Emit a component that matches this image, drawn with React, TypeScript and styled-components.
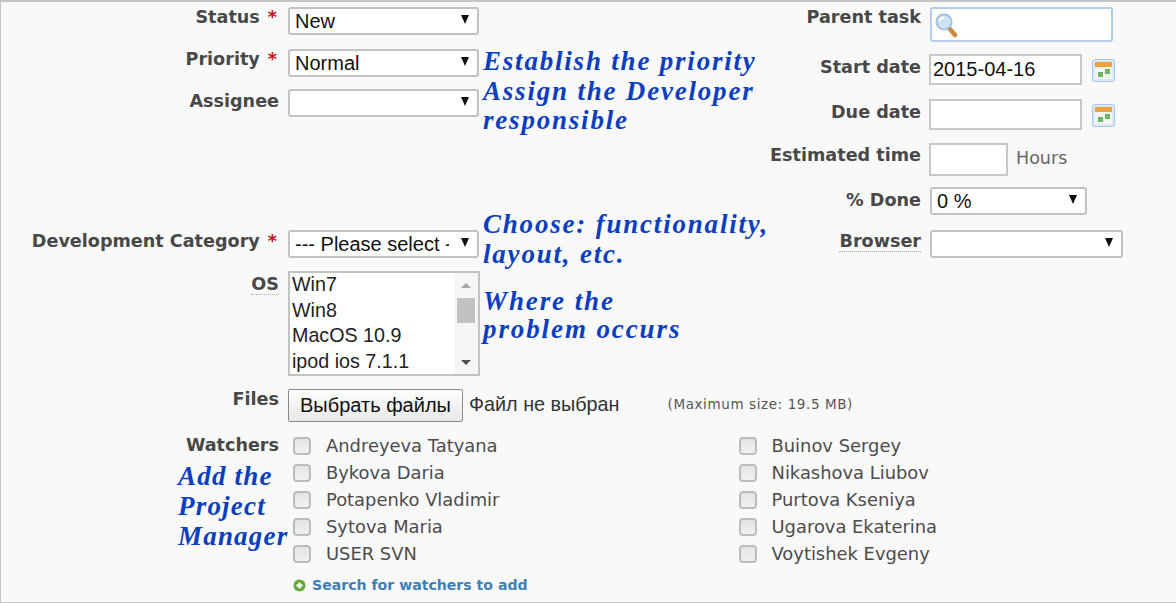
import styled, { createGlobalStyle } from "styled-components";

const GlobalStyle = createGlobalStyle`
  html, body {
    margin: 0;
    padding: 0;
    background: #f9f9f9;
  }
`;

const Page = styled.div`
  width: 1176px;
  height: 603px;
  box-sizing: border-box;
  overflow: hidden;
  border-top: 2px solid #c4c4c4;
  border-left: 1px solid #c4c4c4;
  border-bottom: 1px solid #c4c4c4;
  background: #f9f9f9;
  padding-top: 5px;
  font-family: "DejaVu Sans", sans-serif;
  color: #444;
`;

const Columns = styled.div`
  display: flex;
  height: 256px;
`;

const LeftColumn = styled.div`
  width: 600px;
  display: flex;
  flex-direction: column;
`;

const RightColumn = styled.div`
  flex: 1;
  display: flex;
  flex-direction: column;
`;

const Row = styled.div<{ $top?: number; $height: number }>`
  position: relative;
  display: flex;
  gap: 9px;
  height: ${(p) => p.$height}px;
  margin-top: ${(p) => p.$top ?? 0}px;
`;

const RightRow = styled(Row)`
  gap: 8px;
`;

const Label = styled.label<{ $width?: number; $dotted?: boolean; $up?: number }>`
  flex: none;
  width: ${(p) => p.$width ?? 278}px;
  box-sizing: border-box;
  padding-top: ${(p) => p.$up ?? 0}px;
  text-align: right;
  font-size: 17.6px;
  font-weight: bold;
  line-height: 20px;
  color: #484848;
  span.dots {
    border-bottom: ${(p) => (p.$dotted ? "1px dotted #aaa" : "none")};
  }
`;

const Required = styled.span`
  color: #c8101a;
  margin: 0 2px 0 8px;
`;

const SelectWrap = styled.div<{ $width: number; $left?: number }>`
  position: relative;
  width: ${(p) => p.$width}px;
  height: 28px;
  margin-left: ${(p) => p.$left ?? 0}px;
  &::after {
    content: "";
    position: absolute;
    right: 10px;
    top: 8px;
    border-left: 4.5px solid transparent;
    border-right: 4.5px solid transparent;
    border-top: 9px solid #111;
  }
`;

const Select = styled.select`
  appearance: none;
  width: 100%;
  height: 100%;
  box-sizing: border-box;
  border: 2px solid #c2c2c2;
  border-radius: 3px;
  background: #fff;
  padding: 0 28px 1px 5px;
  font-family: "Liberation Sans", sans-serif;
  font-size: 20px;
  color: #111;
  outline: none;
`;

const TextInput = styled.input<{ $width: number; $height: number }>`
  width: ${(p) => p.$width}px;
  height: ${(p) => p.$height}px;
  box-sizing: border-box;
  border: 2px solid #c8c8c8;
  background: #fff;
  padding: 0 2px;
  font-family: "Liberation Sans", sans-serif;
  font-size: 20px;
  color: #111;
  outline: none;
`;

const SearchBox = styled.div`
  display: flex;
  align-items: center;
  width: 183px;
  height: 35px;
  margin-left: 1px;
  box-sizing: border-box;
  border: 2px solid #b5cde6;
  border-radius: 3px;
  background: #fff;
  padding-left: 3px;
`;

const CalendarButton = styled.span`
  display: block;
  margin: 5px 0 0 2px;
  width: 23px;
  height: 23px;
`;

const Hours = styled.span`
  margin-top: 5px;
  font-size: 17.5px;
  line-height: 20px;
  color: #666;
`;

const Note = styled.div<{ $x: number; $y: number; $spacing?: number; $leading?: number }>`
  position: absolute;
  left: ${(p) => p.$x}px;
  top: ${(p) => p.$y}px;
  font-family: "Liberation Serif", serif;
  font-style: italic;
  font-weight: bold;
  font-size: 27px;
  line-height: ${(p) => p.$leading ?? 30}px;
  letter-spacing: ${(p) => p.$spacing ?? 1.8}px;
  white-space: nowrap;
  color: #0b3fbf;
`;

const ListBox = styled.div`
  display: flex;
  width: 192px;
  height: 105px;
  box-sizing: border-box;
  border: 2px solid #c2c2c2;
  background: #fff;
`;

const ListItems = styled.ul`
  flex: 1;
  list-style: none;
  margin: -1px 0 0;
  padding: 0 0 0 2px;
  font-family: "Liberation Sans", sans-serif;
  font-size: 19.7px;
  line-height: 25.5px;
  color: #222;
`;

const ScrollTrack = styled.div`
  position: relative;
  width: 24px;
  margin-left: auto;
  background: #f6f6f6;
`;

const ScrollUp = styled.div`
  position: absolute;
  top: 10px;
  left: 7px;
  border-left: 5px solid transparent;
  border-right: 5px solid transparent;
  border-bottom: 5px solid #a6a6a6;
`;

const ScrollDown = styled.div`
  position: absolute;
  bottom: 9px;
  left: 7px;
  border-left: 5px solid transparent;
  border-right: 5px solid transparent;
  border-top: 5px solid #505050;
`;

const ScrollThumb = styled.div`
  position: absolute;
  top: 25px;
  left: 3px;
  width: 18px;
  height: 25px;
  background: #c2c2c2;
`;

const FileButton = styled.button`
  width: 175px;
  height: 33px;
  box-sizing: border-box;
  border: 1px solid #8a8a8a;
  border-radius: 2px;
  background: linear-gradient(#fdfdfd, #e8e8e8);
  font-family: "Liberation Sans", sans-serif;
  font-size: 20px;
  color: #111;
  padding: 0;
`;

const FileStatus = styled.span`
  margin: 4px 0 0 -3px;
  font-family: "Liberation Sans", sans-serif;
  font-size: 19.8px;
  color: #333;
`;

const MaxSize = styled.span`
  margin: 6px 0 0 39px;
  font-size: 13.5px;
  letter-spacing: 0.6px;
  line-height: 18px;
  color: #555;
`;

const Watchers = styled.div`
  display: grid;
  grid-template-columns: 445.5px 1fr;
  grid-auto-rows: 27px;
  margin-left: 5px;
`;

const WatcherLabel = styled.label`
  display: flex;
  align-items: center;
  gap: 15px;
  font-size: 17.9px;
  color: #4c4c4c;
`;

const CheckBox = styled.input`
  appearance: none;
  margin: 0;
  flex: none;
  width: 18px;
  height: 18px;
  box-sizing: border-box;
  border: 2px solid #bcbcbc;
  border-radius: 4px;
  background: linear-gradient(#e4e4e4, #f0f0f0);
`;

const SearchLink = styled.a`
  display: flex;
  align-items: center;
  gap: 6px;
  margin: 8px 0 0 5px;
  font-size: 14.1px;
  font-weight: bold;
  line-height: 20px;
  color: #3e7fb5;
  text-decoration: none;
`;

const WatchersArea = styled.div`
  flex: 1;
`;

const MagnifierIcon = () => (
  <svg width="24" height="26" viewBox="0 0 24 26">
    <path d="M14 16l6 7" stroke="#c98a3c" strokeWidth="4.5" strokeLinecap="round" />
    <circle cx="9" cy="10" r="7.5" fill="#cfe3f5" stroke="#a3c4e0" strokeWidth="2" />
    <path d="M4.5 9a4.5 4.5 0 0 1 4.5-3.5" stroke="#fff" strokeWidth="2" fill="none" />
  </svg>
);

const CalendarIcon = () => (
  <svg width="23" height="23" viewBox="0 0 23 23">
    <rect x="0.5" y="0.5" width="22" height="22" rx="2" fill="#dbe9f7" stroke="#a9c8e8" />
    <rect x="3" y="3" width="17" height="17" fill="#f4f5ee" />
    <rect x="3" y="3" width="17" height="5" fill="#f0a13e" />
    <rect x="6" y="13" width="5" height="5" fill="#6bb564" />
    <rect x="13" y="10" width="5" height="5" fill="#6bb564" />
  </svg>
);

const PlusIcon = () => (
  <svg width="13" height="13" viewBox="0 0 13 13">
    <circle cx="6.5" cy="6.5" r="6" fill="#62a83a" />
    <path d="M6.5 3.5v6M3.5 6.5h6" stroke="#f4f8ee" strokeWidth="2.4" />
  </svg>
);

const watcherNames = ["Andreyeva Tatyana", "Buinov Sergey", "Bykova Daria", "Nikashova Liubov", "Potapenko Vladimir", "Purtova Kseniya", "Sytova Maria", "Ugarova Ekaterina", "USER SVN", "Voytishek Evgeny"];

const osList = ["Win7", "Win8", "MacOS 10.9", "ipod ios 7.1.1"];

const App = () => {
  return (
    <>
      <GlobalStyle />
      <Page>
        <Columns>
          <LeftColumn>
            <Row $height={28}>
              <Label>Status<Required>*</Required></Label>
              <SelectWrap $width={191}>
                <Select defaultValue="New"><option>New</option></Select>
              </SelectWrap>
            </Row>
            <Row $top={14} $height={28}>
              <Label>Priority<Required>*</Required></Label>
              <SelectWrap $width={191}>
                <Select defaultValue="Normal"><option>Normal</option></Select>
              </SelectWrap>
              <Note $x={482} $y={-2} $leading={29.5}>Establish the priority<br />Assign the Developer<br />responsible</Note>
            </Row>
            <Row $top={12} $height={28}>
              <Label $up={2}>Assignee</Label>
              <SelectWrap $width={191}>
                <Select><option></option></Select>
              </SelectWrap>
            </Row>
            <Row $top={113} $height={28}>
              <Label $up={1}>Development Category<Required>*</Required></Label>
              <SelectWrap $width={191}>
                <Select defaultValue="--- Please select ---"><option>--- Please select ---</option></Select>
              </SelectWrap>
              <Note $x={482} $y={-21}>Choose: functionality,<br />layout, etc.</Note>
            </Row>
          </LeftColumn>
          <RightColumn>
            <RightRow $height={35}>
              <Label $width={320}>Parent task</Label>
              <SearchBox><MagnifierIcon /></SearchBox>
            </RightRow>
            <RightRow $top={12} $height={30}>
              <Label $width={320} $up={3}>Start date</Label>
              <TextInput $width={153} $height={31} defaultValue="2015-04-16" />
              <CalendarButton><CalendarIcon /></CalendarButton>
            </RightRow>
            <RightRow $top={15} $height={30}>
              <Label $width={320} $up={3}>Due date</Label>
              <TextInput $width={153} $height={31} />
              <CalendarButton><CalendarIcon /></CalendarButton>
            </RightRow>
            <RightRow $top={14} $height={32}>
              <Label $width={320} $up={2}>Estimated time</Label>
              <TextInput $width={79} $height={33} />
              <Hours>Hours</Hours>
            </RightRow>
            <RightRow $top={12} $height={29}>
              <Label $width={320} $up={3}>% Done</Label>
              <SelectWrap $width={157} $left={1}>
                <Select defaultValue="0 %"><option>0 %</option></Select>
              </SelectWrap>
            </RightRow>
            <RightRow $top={14} $height={28}>
              <Label $width={320} $up={1} $dotted><span className="dots">Browser</span></Label>
              <SelectWrap $width={193} $left={1}>
                <Select><option></option></Select>
              </SelectWrap>
            </RightRow>
          </RightColumn>
        </Columns>
        <Row $top={8} $height={105}>
          <Label $dotted $up={3}><span className="dots">OS</span></Label>
          <ListBox>
            <ListItems>
              {osList.map((os) => <li key={os}>{os}</li>)}
            </ListItems>
            <ScrollTrack>
              <ScrollUp />
              <ScrollThumb />
              <ScrollDown />
            </ScrollTrack>
          </ListBox>
          <Note $x={482} $y={16} $spacing={1.9} $leading={28}>Where the<br />problem occurs</Note>
        </Row>
        <Row $top={13} $height={33}>
          <Label>Files</Label>
          <FileButton type="button">Выбрать файлы</FileButton>
          <FileStatus>Файл не выбран</FileStatus>
          <MaxSize>(Maximum size: 19.5 MB)</MaxSize>
        </Row>
        <Row $top={10} $height={170}>
          <Label $up={3}>Watchers</Label>
          <WatchersArea>
            <Watchers>
              {watcherNames.map((name) => (
                <WatcherLabel key={name}><CheckBox type="checkbox" />{name}</WatcherLabel>
              ))}
            </Watchers>
            <SearchLink href="#"><PlusIcon />Search for watchers to add</SearchLink>
          </WatchersArea>
          <Note $x={177} $y={29} $spacing={1.2}>Add the<br />Project<br />Manager</Note>
        </Row>
      </Page>
    </>
  );
};

export default App;
